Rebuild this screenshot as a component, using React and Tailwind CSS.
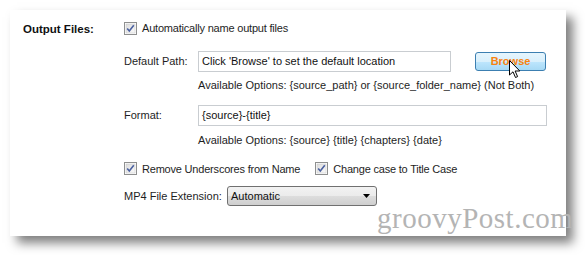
import React from 'react';

const font = { fontFamily: '"Liberation Sans", Arial, sans-serif' };

const CheckBox = () => (
  <svg width="13" height="13" viewBox="0 0 13 13" className="shrink-0">
    <defs>
      <linearGradient id="cbg" x1="0" y1="0" x2="1" y2="1">
        <stop offset="0" stopColor="#dcdcdc" />
        <stop offset="1" stopColor="#fbfbfb" />
      </linearGradient>
    </defs>
    <rect x="0.5" y="0.5" width="12" height="12" fill="#fff" stroke="#8e8f8f" />
    <rect x="2" y="2" width="9" height="9" fill="url(#cbg)" stroke="#c4c4c4" strokeWidth="0.5" />
    <path d="M3.2 6.4 L5.3 9 L9.8 3.2" fill="none" stroke="#4b61a0" strokeWidth="1.6" />
  </svg>
);

const Check = ({ children }) => (
  <label className="flex items-center gap-[5px] text-[11px] text-[#1e1e1e] tracking-[-0.2px]">
    <CheckBox />
    <span>{children}</span>
  </label>
);

const Field = ({ value, className }) => (
  <div className={`h-[21px] border border-[#c9cdd1] bg-white px-[3px] flex items-center text-[11px] text-[#111] ${className}`}>
    {value}
  </div>
);

export default function App() {
  return (
    <div className="w-[585px] h-[255px] bg-white pt-[10px] pl-[10px] overflow-hidden" style={font}>
      <div className="relative w-[556px] h-[226px] bg-white shadow-[7px_7px_10px_rgba(0,0,0,0.5)] flex">
        <div className="w-[114px] pl-[13px] pt-[11px] text-[11.5px] font-bold text-[#111]">Output Files:</div>
        <div className="flex flex-col pt-[10px]">
          <Check>Automatically name output files</Check>

          <div className="flex items-center mt-[14px]">
            <span className="w-[74px] text-[11px] text-[#1e1e1e]">Default Path:</span>
            <Field value="Click 'Browse' to set the default location" className="w-[253px]" />
            <div className="relative ml-[24px] w-[71px] h-[19px] rounded-[3px] border border-[#3c7fb1] bg-[linear-gradient(#e6f5fd_0%,#d9f0fc_50%,#bee6fd_50%,#a7d9f5_100%)] flex items-center justify-center text-[11px] font-bold text-[#f7820f]">
              Browse
              <svg width="12" height="19" viewBox="0 0 12 19" className="absolute left-[33px] top-[7px]">
                <path d="M0.5 0.5 L0.5 15 L4 11.8 L6.5 17.5 L8.6 16.6 L6.1 11 L10.8 11 Z" fill="#fff" stroke="#000" strokeWidth="1" />
              </svg>
            </div>
          </div>

          <div className="ml-[74px] mt-[5px] text-[11px] text-[#1e1e1e]">
            Available Options: {'{source_path}'} or {'{source_folder_name}'} (Not Both)
          </div>

          <div className="flex items-center mt-[12px]">
            <span className="w-[74px] text-[11px] text-[#1e1e1e]">Format:</span>
            <Field value="{source}-{title}" className="w-[349px]" />
          </div>

          <div className="ml-[74px] mt-[6px] text-[11px] text-[#1e1e1e]">
            Available Options: {'{source}'} {'{title}'} {'{chapters}'} {'{date}'}
          </div>

          <div className="flex items-center gap-[15px] mt-[12px]">
            <Check>Remove Underscores from Name</Check>
            <Check>Change case to Title Case</Check>
          </div>

          <div className="flex items-center mt-[9px]">
            <span className="w-[103px] text-[11px] text-[#1e1e1e]">MP4 File Extension:</span>
            <div className="w-[150px] h-[20px] rounded-[3px] border border-[#707070] bg-[linear-gradient(#f2f2f2_0%,#ebebeb_50%,#dddddd_50%,#cfcfcf_100%)] flex items-center justify-between pl-[3px] pr-[6px] text-[11px] text-[#111]">
              <span>Automatic</span>
              <svg width="7" height="4" viewBox="0 0 7 4"><path d="M0 0 H7 L3.5 4 Z" fill="#000" /></svg>
            </div>
          </div>
        </div>

        <div className="absolute left-[367px] top-[187px] text-[29px] text-[#b4b4b4] tracking-[0.5px]" style={{ fontFamily: '"Liberation Serif", "Times New Roman", serif' }}>
          groovyPost.com
        </div>
      </div>
    </div>
  );
}
